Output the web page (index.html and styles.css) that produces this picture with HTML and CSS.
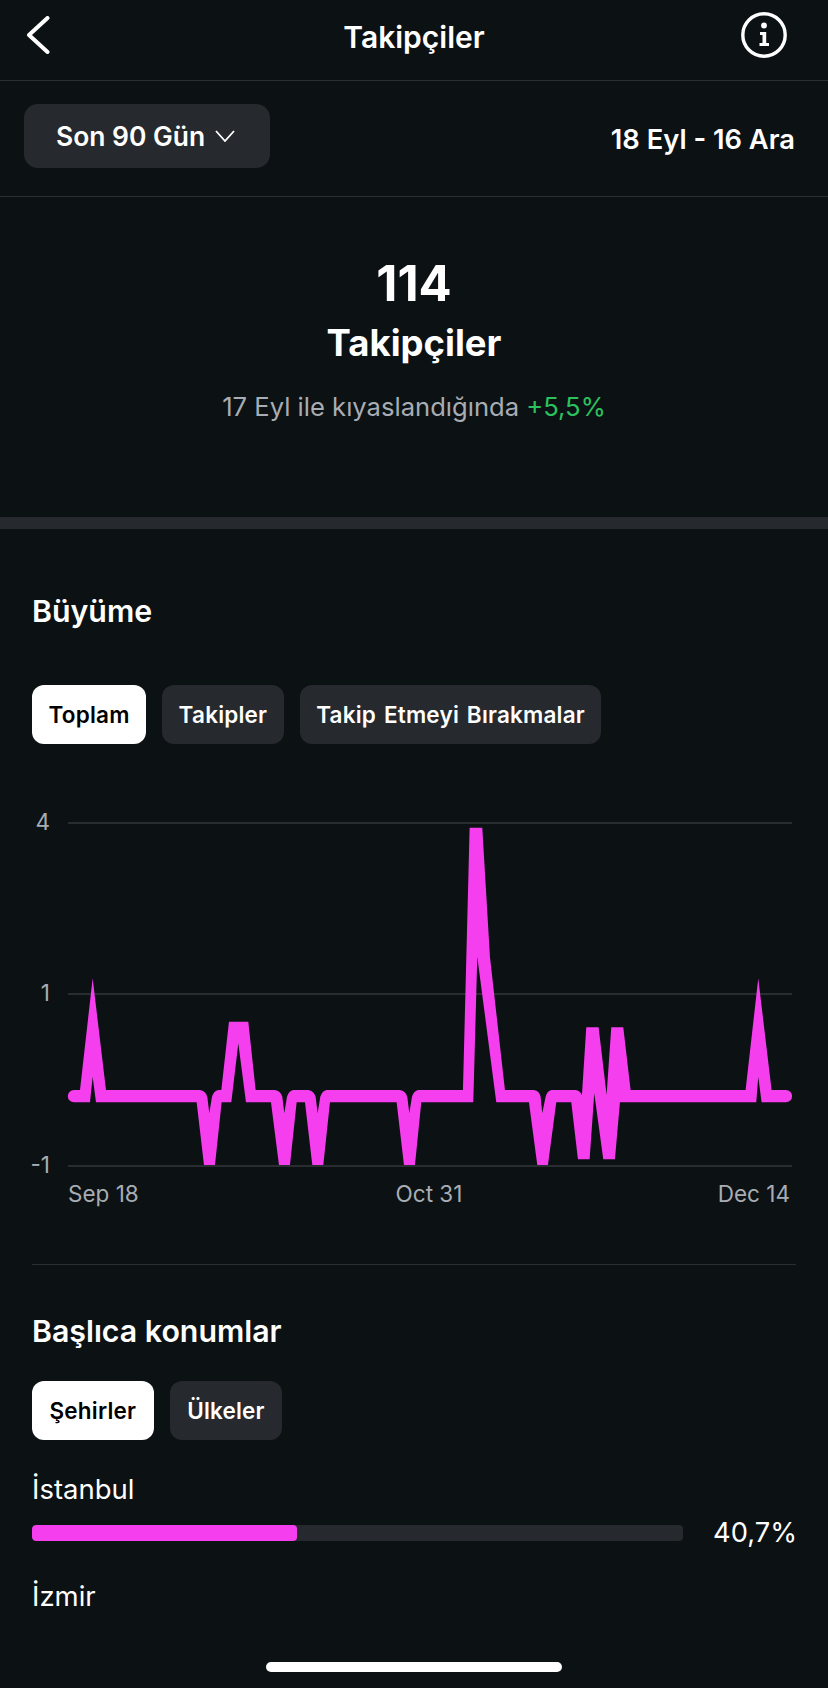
FILE: index.html
```html
<!DOCTYPE html>
<html lang="tr">
<head>
  <meta charset="UTF-8">
  <meta name="viewport" content="width=device-width, initial-scale=1">
  <title>Takipçiler</title>
  <link rel="stylesheet" href="styles.css">
</head>
<body>
  <div class="page">
    <header class="topbar">
      <svg class="back-icon" viewBox="0 0 24 38" width="24" height="38">
        <path d="M21.5 2 L3 19 L21.5 36" fill="none" stroke="#fff" stroke-width="4" stroke-linecap="round" stroke-linejoin="round"/>
      </svg>
      <h1 class="topbar-title">Takipçiler</h1>
      <svg class="info-icon" viewBox="0 0 46 46" width="46" height="46">
        <circle cx="23" cy="23" r="21.2" fill="none" stroke="#fff" stroke-width="3.4"/>
        <circle cx="23" cy="13.5" r="2.9" fill="#fff"/>
        <path d="M19 20 H25.2 V31 H28 V34 H18.5 V31 H21.5 V23 H19 Z" fill="#fff"/>
      </svg>
    </header>

    <div class="range-row">
      <button class="range-btn">
        Son 90 Gün
        <svg viewBox="0 0 20 12" width="20" height="12">
          <path d="M1 1 L10 11 L19 1" fill="none" stroke="#fff" stroke-width="1.8"/>
        </svg>
      </button>
      <span class="range-dates">18 Eyl - 16 Ara</span>
    </div>

    <section class="summary">
      <div class="summary-num">114</div>
      <div class="summary-label">Takipçiler</div>
      <p class="summary-compare">17 Eyl ile kıyaslandığında <span class="up">+5,5%</span></p>
    </section>

    <section class="growth">
      <h2 class="section-title">Büyüme</h2>
      <div class="tabs">
        <span class="tab active">Toplam</span>
        <span class="tab">Takipler</span>
        <span class="tab">Takip Etmeyi Bırakmalar</span>
      </div>
    </section>

    <svg class="chart" viewBox="0 0 828 420" width="828" height="420">
      <g stroke="#33373b" stroke-width="1.5">
        <line x1="68" y1="33" x2="792" y2="33"/>
        <line x1="68" y1="204" x2="792" y2="204"/>
        <line x1="68" y1="376" x2="792" y2="376"/>
      </g>
      <g class="axis-y" text-anchor="end">
        <text x="50" y="40">4</text>
        <text x="50" y="211">1</text>
        <text x="50" y="383">-1</text>
      </g>
      <g class="axis-x">
        <text x="68" y="412">Sep 18</text>
        <text x="429" y="412" text-anchor="middle">Oct 31</text>
        <text x="790" y="412" text-anchor="end">Dec 14</text>
      </g>
      <!-- traced line, coordinates are 3x -->
      <path transform="scale(0.3333)" fill="#f53fee" d="M222 900 L240 900 L278 565 L318 900 L600 900 Q616 902 622 920 L628 970 L636 920 Q642 902 655 900 L664 900 L687 695 L745 695 L767 900 L825 900 Q841 902 847 920 L853 970 L861 920 Q867 902 880 900 L925 900 Q941 902 947 920 L953 970 L961 920 Q967 902 980 900 L1200 900 Q1216 902 1222 920 L1228 970 L1236 920 Q1242 902 1255 900 L1389 900 L1409 113 L1447 113 L1470 500 L1515 900 L1602 900 Q1618 902 1622 920 L1627 970 L1637 920 Q1642 902 1655 900 L1727 900 Q1740 902 1746 915 L1759 712 L1796 712 L1820 915 L1834 712 L1870 712 L1892 900 L2237 900 L2275 565 L2315 900 L2358 900 A18 18 0 0 1 2358 937 L2285 937 L2275 860 L2269 937 L1860 937 L1845 1108 L1810 1108 L1783 910 L1769 1108 L1734 1108 L1714 937 L1669 937 L1644 1125 L1612 1125 L1587 937 L1489 937 L1432 500 L1420 937 L1264 937 L1245 1125 L1212 1125 L1190 937 L990 937 L970 1125 L937 1125 L915 937 L890 937 L870 1125 L837 1125 L813 937 L738 937 L715 760 L694 937 L665 937 L645 1125 L612 1125 L590 937 L288 937 L278 860 L270 937 L222 937 A18 18 0 0 1 222 900 Z"/>
    </svg>

    <section class="locations">
      <h2 class="section-title">Başlıca konumlar</h2>
      <div class="tabs">
        <span class="tab active">Şehirler</span>
        <span class="tab">Ülkeler</span>
      </div>
      <div class="loc-name">İstanbul</div>
      <div class="loc-row">
        <div class="loc-bar"><div class="loc-fill" style="width: 40.7%"></div></div>
        <span class="loc-value">40,7%</span>
      </div>
      <div class="loc-name next">İzmir</div>
    </section>

    <div class="home-bar"></div>
  </div>
</body>
</html>
```

FILE: styles.css
```css
* {
  box-sizing: border-box;
}
html, body {
  margin: 0;
  background: #0c1114;
}
.page {
  width: 828px;
  height: 1688px;
  overflow: hidden;
  position: relative;
  background: #0c1114;
  color: #fff;
  font-family: Inter, "Noto Sans", sans-serif;
}
.topbar {
  height: 81px;
  display: grid;
  grid-template-columns: 1fr auto 1fr;
  align-items: center;
  padding: 0 26px 11px;
  border-bottom: 1px solid #2a2d31;
}
.topbar-title {
  margin: 0;
  padding-top: 5px;
  font-size: 30px;
  font-weight: 600;
}
.info-icon {
  justify-self: end;
  margin-right: 15px;
}
.range-row {
  height: 116px;
  display: flex;
  align-items: center;
  justify-content: space-between;
  padding: 0 33px 0 24px;
  border-bottom: 1px solid #2a2d31;
}
.range-btn {
  width: 246px;
  height: 64px;
  margin-bottom: 5px;
  display: flex;
  align-items: center;
  gap: 10px;
  padding: 0 0 1px 32px;
  border: none;
  border-radius: 14px;
  background: #26292e;
  color: #fff;
  font: 600 26.4px Inter, sans-serif;
}
.range-dates {
  font-size: 27.3px;
  font-weight: 600;
  margin-top: 1px;
}
.summary {
  height: 332px;
  padding-top: 59px;
  text-align: center;
  border-bottom: 12px solid #26292e;
}
.summary-num {
  font-size: 49px;
  font-weight: 700;
  line-height: 56px;
}
.summary-label {
  font-size: 36.5px;
  font-weight: 700;
  line-height: 46px;
  margin-top: 8px;
}
.summary-compare {
  margin: 25px 0 0;
  font-size: 25.6px;
  color: #a8adb3;
}
.up {
  color: #2bc15e;
}
.growth {
  padding: 63px 32px 0;
  height: 261px;
}
.section-title {
  margin: 0;
  font-size: 30.3px;
  font-weight: 600;
  line-height: 38px;
}
.tabs {
  display: flex;
  gap: 16px;
  margin-top: 55px;
}
.tab {
  height: 59px;
  padding: 0 16.5px;
  display: flex;
  align-items: center;
  border-radius: 12px;
  background: #26292e;
  font-size: 22.5px;
  font-weight: 600;
  letter-spacing: 0.2px;
  word-spacing: 2px;
}
.tab.active {
  background: #fff;
  color: #000;
}
.chart {
  display: block;
}
.chart text {
  font-family: Inter, sans-serif;
  font-size: 22.5px;
  fill: #a8adb3;
}
.locations {
  margin: 54px 32px 0;
  padding-top: 47px;
  border-top: 1px solid #2a2d31;
}
.locations .tabs {
  margin-top: 31px;
}
.locations .tab {
  padding: 0 17.5px;
}
.loc-name {
  margin-top: 30px;
  font-size: 27.5px;
  line-height: 38px;
}
.loc-name.next {
  margin-top: 28px;
}
.loc-row {
  display: flex;
  align-items: center;
  justify-content: space-between;
  margin-right: -1px;
  margin-top: 8px;
}
.loc-bar {
  width: 651px;
  height: 16px;
  border-radius: 4px;
  background: #26292e;
  overflow: hidden;
}
.loc-fill {
  height: 100%;
  background: #f53fee;
  border-radius: 4px;
}
.loc-value {
  font-size: 27.3px;
}
.home-bar {
  position: absolute;
  left: 266px;
  bottom: 16px;
  width: 296px;
  height: 10px;
  border-radius: 5px;
  background: #fff;
}
```
